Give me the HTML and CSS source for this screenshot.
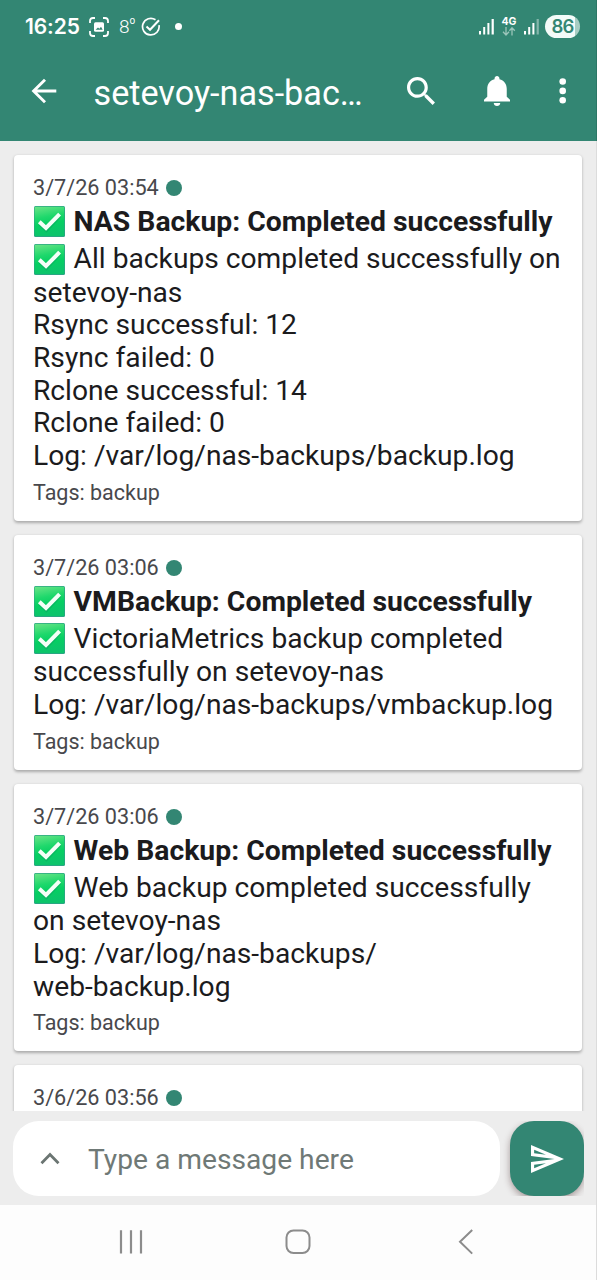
FILE: index.html
```html
<!DOCTYPE html>
<html lang="en">
<head>
<meta charset="utf-8">
<title>setevoy-nas-backups</title>
<link rel="stylesheet" href="styles.css">
</head>
<body>
<svg class="defs" width="0" height="0">
  <defs>
    <linearGradient id="green" x1="0" y1="0" x2="0.2" y2="1">
      <stop offset="0" stop-color="#6be487"/><stop offset="0.4" stop-color="#1fd86c"/><stop offset="0.65" stop-color="#06cf62"/><stop offset="1" stop-color="#0cc46b"/>
    </linearGradient>
    <symbol id="check" viewBox="0 0 31 31">
      <rect width="31" height="31" rx="1.5" fill="#2aa583"/>
      <rect x="0.6" y="0.8" width="29.6" height="29.2" rx="1" fill="url(#green)"/>
      <path d="M6 18 12.4 24.2 26 9.7" fill="none" stroke="#0a9a5c" stroke-opacity=".4" stroke-width="3.6"/>
      <path d="M5.3 15.8 12 22 25.6 8.2" fill="none" stroke="#f4fff8" stroke-width="4"/>
    </symbol>
  </defs>
</svg>
<div class="screen">
  <header class="top">
    <div class="status">
      <span class="clock">16:25</span>
      <svg class="capture" width="20" height="20" viewBox="0 0 20 20" fill="none" stroke="#fff" stroke-width="1.8"><path d="M1 6V4Q1 1 4 1H6M14 1H16Q19 1 19 4V6M19 14V16Q19 19 16 19H14M6 19H4Q1 19 1 16V14"/><rect x="5" y="5.2" width="10" height="9.6" rx="1.5" fill="#fff" stroke="none"/><path d="M6.6 12.8 9 10.4 10.4 11.7 12 9.8 13.7 12.8Z" fill="#338673" stroke="none"/></svg>
      <span class="temp">8<small>o</small></span>
      <svg class="done" width="20" height="20" viewBox="0 0 20 20" fill="none" stroke="#fff" stroke-width="1.7"><path d="M14.5 2.8A8.3 8.3 0 1 0 18 8.2"/><path d="M5.5 9.6 9 12.8 18 3.2" stroke-width="2"/></svg>
      <span class="dot"></span>
      <span class="grow"></span>
      <svg class="signal" width="16" height="17" viewBox="0 0 16 17" fill="#fff"><rect x="0" y="13" width="2" height="3.5"/><rect x="4.2" y="9" width="2" height="7.5"/><rect x="8.4" y="5" width="2" height="11.5"/><rect x="12.6" y="1" width="2.2" height="15.5"/></svg>
      <span class="net"><b>4G</b><svg width="14" height="9" viewBox="0 0 14 9" fill="none" stroke="#9bc5ba" stroke-width="1.3"><path d="M4 0V8M1 4.8 4 8 7 4.8M10 8.5V.8M7.4 3.8 10 .8 12.8 3.8"/></svg></span>
      <svg class="signal two" width="16" height="17" viewBox="0 0 16 17" fill="#fff"><rect x="0" y="13" width="2" height="3.5"/><rect x="4.2" y="9" width="2" height="7.5"/><rect x="8.4" y="5" width="2" height="11.5"/><rect x="12.6" y="1" width="2.2" height="15.5" opacity=".4"/></svg>
      <span class="battery">86</span>
    </div>
    <div class="appbar">
      <svg class="back" width="26" height="26" viewBox="0 0 26 26" fill="none" stroke="#fff" stroke-width="2.9"><path d="M25.3 13H3M14 1.8 2.6 13 14 24.2"/></svg>
      <h1>setevoy-nas-bac…</h1>
      <svg class="search" width="28" height="28" viewBox="3 3 17.5 17.5" fill="#fff"><path d="M15.5 14h-.79l-.28-.27C15.41 12.59 16 11.11 16 9.5 16 5.91 13.09 3 9.5 3S3 5.91 3 9.5 5.91 16 9.5 16c1.61 0 3.09-.59 4.23-1.57l.27.28v.79l5 4.99L20.49 19l-4.99-5zm-6 0C7.01 14 5 11.99 5 9.5S7.01 5 9.5 5 14 7.01 14 9.5 11.99 14 9.5 14z"/></svg>
      <svg class="bell" width="26" height="31" viewBox="4 2.5 16 19.5" preserveAspectRatio="none" fill="#fff"><path d="M12 22c1.1 0 2-.9 2-2h-4c0 1.1.89 2 2 2zm6-6v-5c0-3.07-1.64-5.64-4.5-6.32V4c0-.83-.67-1.5-1.5-1.5s-1.5.67-1.5 1.5v.68C7.63 5.36 6 7.92 6 11v5l-2 2v1h16v-1l-2-2z"/></svg>
      <svg class="more" width="8" height="28" viewBox="0 0 8 28" fill="#fff"><circle cx="3.7" cy="4.5" r="3.3"/><circle cx="3.7" cy="13.9" r="3.3"/><circle cx="3.7" cy="23.3" r="3.3"/></svg>
    </div>
  </header>
  <main class="list">
    <article class="card">
      <div class="date">3/7/26 03:54<i></i></div>
      <h2><svg><use href="#check"/></svg>NAS Backup: Completed successfully</h2>
      <p class="first"><svg><use href="#check"/></svg>All backups completed successfully on</p>
      <p>setevoy-nas</p>
      <p>Rsync successful: 12</p>
      <p>Rsync failed: 0</p>
      <p>Rclone successful: 14</p>
      <p>Rclone failed: 0</p>
      <p>Log: /var/log/nas-backups/backup.log</p>
      <div class="tags">Tags: backup</div>
    </article>
    <article class="card">
      <div class="date">3/7/26 03:06<i></i></div>
      <h2><svg><use href="#check"/></svg>VMBackup: Completed successfully</h2>
      <p class="first"><svg><use href="#check"/></svg>VictoriaMetrics backup completed</p>
      <p>successfully on setevoy-nas</p>
      <p>Log: /var/log/nas-backups/vmbackup.log</p>
      <div class="tags">Tags: backup</div>
    </article>
    <article class="card">
      <div class="date">3/7/26 03:06<i></i></div>
      <h2><svg><use href="#check"/></svg>Web Backup: Completed successfully</h2>
      <p class="first"><svg><use href="#check"/></svg>Web backup completed successfully</p>
      <p>on setevoy-nas</p>
      <p>Log: /var/log/nas-backups/</p>
      <p>web-backup.log</p>
      <div class="tags">Tags: backup</div>
    </article>
    <article class="card">
      <div class="date">3/6/26 03:56<i></i></div>
    </article>
  </main>
  <div class="composer">
    <div class="field">
      <svg width="20" height="13" viewBox="0 0 20 13" fill="none" stroke="#6b7572" stroke-width="2.8"><path d="M1.5 11.2 10 2.6 18.5 11.2"/></svg>
      <span>Type a message here</span>
    </div>
    <div class="sendbox"><div class="send">
      <svg width="33" height="28" viewBox="2 3 21 18" preserveAspectRatio="none" fill="#fff"><path d="M4.01 6.03l7.51 3.22-7.52-1 .01-2.22m7.5 8.72L4 17.97v-2.22l7.51-1M2.01 3L2 10l15 2-15 2 .01 7L23 12 2.01 3z"/></svg>
    </div></div>
  </div>
  <nav class="navbar">
    <svg width="24" height="26" viewBox="0 0 24 26" stroke="#8c8c8c" stroke-width="2.2"><path d="M2 1.2V24.5M12 1.2V24.5M22 1.2V24.5"/></svg>
    <svg width="26" height="26" viewBox="0 0 26 26" fill="none" stroke="#8c8c8c" stroke-width="2"><rect x="1.5" y="1.5" width="23" height="22.5" rx="7"/></svg>
    <svg width="16" height="26" viewBox="0 0 16 26" fill="none" stroke="#8c8c8c" stroke-width="2"><path d="M14.2 1 2 12.8 14.2 24.6"/></svg>
  </nav>
</div>
</body>
</html>
```
FILE: styles.css
```css
* { box-sizing: border-box; margin: 0; padding: 0; }
body { font-family: Roboto, sans-serif; background: #ededed; overflow: hidden; }
svg { display: block; flex: none; }
.defs { position: absolute; }
.screen { width: 597px; height: 1280px; display: flex; flex-direction: column; border-right: 1px solid #dcdcdc; }
.top { height: 141px; background: #338673; color: #fff; flex: none; margin-right: -1px; border-right: 1px solid #2c7766; }
.status { height: 54px; display: flex; align-items: center; padding: 0 16px 1px 25px; }
.clock { font: 600 21px Inter, sans-serif; letter-spacing: -0.1px; width: 55px; white-space: nowrap; }
.capture { margin-left: 9px; }
.temp { font: 300 19px Roboto, sans-serif; margin-left: 10px; width: 16px; display: flex; align-items: flex-start; }
.temp small { font-size: 10px; font-weight: 400; }
.done { margin-left: 6px; }
.dot { width: 7px; height: 7px; border-radius: 50%; background: #fff; margin-left: 14px; }
.grow { flex: 1; }
.net { width: 16px; margin: 0 7px 0 6px; display: flex; flex-direction: column; align-items: center; font: 10.5px/10px Inter, sans-serif; }
.battery { width: 35px; height: 23px; border-radius: 12px; margin-left: 5px; background: linear-gradient(90deg, #f3fbf9 87%, #a7cdc3 87%); color: #338673; font: 600 18.5px/23px Inter, sans-serif; letter-spacing: -0.8px; text-align: center; }
.appbar { height: 74px; display: flex; align-items: center; padding-left: 31px; }
.appbar h1 { font-size: 34.2px; line-height: 40px; font-weight: 400; margin-left: 36.5px; width: 313.5px; padding-top: 3px; white-space: nowrap; }
.bell { margin-left: 49px; padding-bottom: 1px; }
.more { margin-left: 49px; }
.list { height: 970px; flex: none; overflow: hidden; padding: 14px 14px 0; }
.card { background: #fff; border-radius: 4px; padding: 19px 0 15.2px 19px; margin-bottom: 14px; box-shadow: 0 1.5px 3px rgba(0,0,0,.28); color: #1b1b1d; white-space: nowrap; }
.date { height: 28px; line-height: 28px; font-size: 21.65px; color: #48484c; display: flex; align-items: center; }
.date i { width: 16px; height: 16px; border-radius: 50%; background: #338673; margin-left: 7px; }
.card h2 { height: 38px; padding-top: 1px; line-height: 37px; font-size: 28.33px; font-weight: 700; display: flex; align-items: center; }
.card p { height: 32.68px; line-height: 32.68px; font-size: 28.2px; }
.card p.first { height: 36.5px; padding-top: 2px; display: flex; align-items: center; }
.card h2 svg, .card p svg { width: 31px; height: 31px; margin: 0 8.6px 0 1px; }
.tags { height: 26px; line-height: 26px; margin-top: 7px; font-size: 21.5px; color: #48484c; }
.composer { height: 94px; flex: none; display: flex; padding: 10px 0 0 13px; }
.field { width: 487px; height: 75px; background: #fff; border-radius: 26px; display: flex; align-items: center; padding-left: 27px; font-size: 28.2px; color: #6f7976; }
.field span { margin-left: 28px; padding-top: 2px; }
.sendbox { margin-left: 2px; width: 82px; height: 75px; overflow: hidden; padding-left: 8px; }
.send { width: 74px; height: 75px; border-radius: 24px; background: #338673; box-shadow: 0 3px 7px rgba(60,30,30,.4); display: flex; align-items: center; justify-content: center; }
.navbar { flex: 1; background: #fdfdfd; display: grid; grid-template-columns: 263px 71px 1fr; padding: 24px 0 0 0; }
.navbar svg:nth-child(1) { margin-left: 119px; }
.navbar svg:nth-child(2) { margin-left: 22px; }
.navbar svg:nth-child(3) { margin-left: 124px; }
```
